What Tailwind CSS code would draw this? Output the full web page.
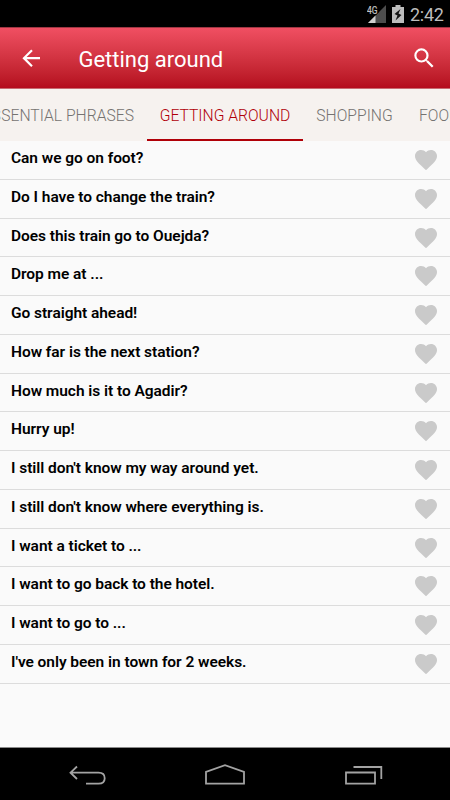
<!DOCTYPE html>
<html lang="en">
<head>
<meta charset="utf-8">
<title>Getting around</title>
<script src="https://cdn.jsdelivr.net/npm/@tailwindcss/browser@4"></script>
</head>
<body class="w-[450px] h-[800px] overflow-hidden bg-[#fafafa] font-['Roboto',sans-serif] flex flex-col">
<div class="h-[27px] shrink-0 bg-black flex items-center justify-end pr-[7px] text-[#bdbdbd]">
  <svg class="w-[20px] h-[20px] mr-[5px]" viewBox="0 0 20 20"><path d="M19 1V19H1Z" fill="#4d4d4d"/><path d="M8.500 11.500V19H1Z" fill="#d0d0d0"/><path d="M0 0H12V8L9 11H0Z" fill="#000"/><text x="0" y="9.500" font-size="10" textLength="10.500" lengthAdjust="spacingAndGlyphs" fill="#c4c4c4" stroke="#c4c4c4" stroke-width=".2">4G</text></svg>
  <svg class="w-[12px] h-[18px] mr-[6px]" viewBox="0 0 12 18"><path d="M0 2H3.500V0H8.500V2H12V18H0Z" fill="#bdbdbd"/><path d="M8.500 4L2.500 9L5.500 10.500L3.500 15.500L9.500 10L6.500 8.500Z" fill="#151515"/></svg>
  <span class="text-[18px] leading-[27px] w-[33px] tracking-[-0.3px] whitespace-nowrap pt-[2px]">2:42</span>
</div>
<header class="h-[62px] shrink-0 bg-linear-to-b from-[#f04f62] to-[#b40b1d] border-t border-t-[#a03643] border-b border-b-[#c86a70] flex items-center pl-[17.500px] pr-[13px] text-white">
  <svg class="size-[26.400px]" viewBox="0 0 24 24" fill="currentColor"><path d="M20 11H7.830l5.590-5.590L12 4l-8 8 8 8 1.410-1.410L7.830 13H20v-2z"/></svg>
  <h1 class="ml-[34.500px] text-[22px] leading-[30px] flex-1 whitespace-nowrap pt-[3px]"><span>Getting around</span></h1>
  <svg class="size-[26.400px]" viewBox="0 0 24 24" fill="currentColor"><path d="M15.500 14h-.79l-.28-.27A6.471 6.471 0 0 0 16 9.500 6.500 6.500 0 1 0 9.500 16c1.610 0 3.090-.59 4.230-1.570l.27.28v.79l5 4.990L20.490 19l-4.990-5zm-6 0C7.010 14 5 11.990 5 9.500S7.010 5 9.500 5 14 7.010 14 9.500 11.990 14 9.500 14z"/></svg>
</header>
<nav class="h-[52px] shrink-0 bg-[#f6f2ef] flex overflow-hidden text-[15.700px] leading-[52px] text-[#757371] font-light whitespace-nowrap">
  <div class="w-[147px] shrink-0 flex justify-end pr-[13px] pt-[1px]"><span><span class="tracking-[0.500px]">ES</span>SENTIAL PHRASES</span></div>
  <div class="w-[156px] shrink-0 text-center text-[#b00008] border-b-2 border-[#b00008] pt-[1px]"><span>GETTING AROUND</span></div>
  <div class="w-[103px] shrink-0 text-center pt-[1px]"><span>SHOPPING</span></div>
  <div class="shrink-0 pl-[13px] pt-[1px]"><span>FOOD &amp; DRINK</span></div>
</nav>
<main id="list" class="flex-1 text-[15.500px] tracking-[-0.050px] font-semibold text-black"></main>
<footer class="h-[53px] shrink-0 bg-black border-t border-[#8a8a8a]">
  <svg class="w-[450px] h-[52px]" viewBox="0 748 450 52" fill="none" stroke="#a3a3a3" stroke-width="1.800"><path d="M77 766.500L70.500 772.700L77 779M70.500 772.700H98.500C102.500 772.700 104.700 775 104.700 778.200S102.500 783.700 98.500 783.700H86"/><path d="M206 783.700V771.800L225 765.200L244 771.800V783.700Z"/><path d="M346 772.500H375V783.700H346ZM353.500 767H381.300V779"/></svg>
</footer>
<script>
const phrases = ["Can we go on foot?","Do I have to change the train?","Does this train go to Ouejda?","Drop me at ...","Go straight ahead!","How far is the next station?","How much is it to Agadir?","Hurry up!","I still don't know my way around yet.","I still don't know where everything is.","I want a ticket to ...","I want to go back to the hotel.","I want to go to ...","I've only been in town for 2 weeks."];
document.getElementById('list').innerHTML = phrases.map(p => `<div class="h-[38.770px] border-b border-[#dcdcdc] flex items-start justify-between pl-[11px] pr-[13px]"><span class="leading-[20px] pt-[7px] whitespace-nowrap">${p}</span><svg class="w-[22px] h-[20.200px] mt-[9px]" viewBox="2 3 20 18.350" fill="#cacaca"><path d="M12 21.350l-1.450-1.320C5.400 15.360 2 12.280 2 8.500 2 5.420 4.420 3 7.500 3c1.740 0 3.410.81 4.500 2.090C13.090 3.810 14.760 3 16.500 3 19.580 3 22 5.420 22 8.500c0 3.780-3.400 6.860-8.550 11.540L12 21.350z"/></svg></div>`).join('');
</script>
</body>
</html>
